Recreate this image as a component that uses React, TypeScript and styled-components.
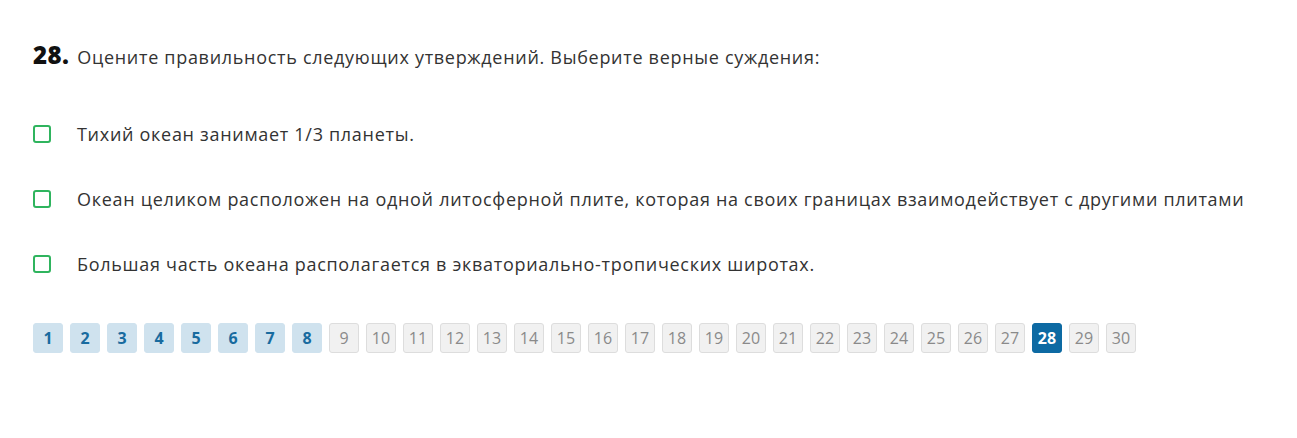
import React from "react";
import styled, { createGlobalStyle } from "styled-components";

const Global = createGlobalStyle`
  html, body { margin: 0; padding: 0; background: #fff; }
  body { font-family: "Open Sans", "Noto Sans", sans-serif; color: #333; }
`;

const Page = styled.div`
  padding: 38px 33px 0 33px;
  display: flex;
  flex-direction: column;
`;

const Header = styled.div`
  display: flex;
  align-items: baseline;
  gap: 8px;
`;

const Num = styled.span`
  font-family: "Open Sans", sans-serif;
  font-weight: 800;
  font-size: 24px;
  color: #111;
  letter-spacing: 0.4px;
`;

const Question = styled.span`
  font-size: 18px;
  color: #333;
  letter-spacing: 0.7px;
`;

const Options = styled.div`
  display: flex;
  flex-direction: column;
  gap: 39px;
  margin-top: 50px;
`;

const Option = styled.label`
  display: flex;
  align-items: center;
  gap: 26px;
  height: 26px;
  font-size: 18px;
  color: #333;
  letter-spacing: 0.7px;
`;

const Box = styled.span`
  width: 14px;
  height: 14px;
  border: 2px solid #2fb45e;
  border-radius: 3px;
  flex: none;
`;

const Pager = styled.div`
  display: flex;
  gap: 7px;
  margin-top: 46px;
`;

const PageBtn = styled.span<{ $kind: "done" | "todo" | "active" }>`
  box-sizing: border-box;
  width: 30px;
  height: 30px;
  border-radius: 3px;
  display: flex;
  align-items: center;
  justify-content: center;
  font-size: 16px;
  font-weight: ${(p) => (p.$kind === "todo" ? 400 : 700)};
  background: ${(p) =>
    p.$kind === "done" ? "#cfe2ee" : p.$kind === "active" ? "#0d6aa3" : "#f1f1f1"};
  color: ${(p) =>
    p.$kind === "done" ? "#186b9f" : p.$kind === "active" ? "#fff" : "#8a8a8a"};
  border: 1px solid
    ${(p) => (p.$kind === "todo" ? "#dddddd" : p.$kind === "active" ? "#0d6aa3" : "#cfe2ee")};
`;

const options = [
  "Тихий океан занимает 1/3 планеты.",
  "Океан целиком расположен на одной литосферной плите, которая на своих границах взаимодействует с другими плитами",
  "Большая часть океана располагается в экваториально-тропических широтах.",
];

export default function App() {
  const pages = Array.from({ length: 30 }, (_, i) => i + 1);
  return (
    <>
      <Global />
      <Page>
        <Header>
          <Num>28.</Num>
          <Question>Оцените правильность следующих утверждений. Выберите верные суждения:</Question>
        </Header>
        <Options>
          {options.map((o) => (
            <Option key={o}>
              <Box />
              <span>{o}</span>
            </Option>
          ))}
        </Options>
        <Pager>
          {pages.map((n) => (
            <PageBtn key={n} $kind={n === 28 ? "active" : n <= 8 ? "done" : "todo"}>
              {n}
            </PageBtn>
          ))}
        </Pager>
      </Page>
    </>
  );
}
